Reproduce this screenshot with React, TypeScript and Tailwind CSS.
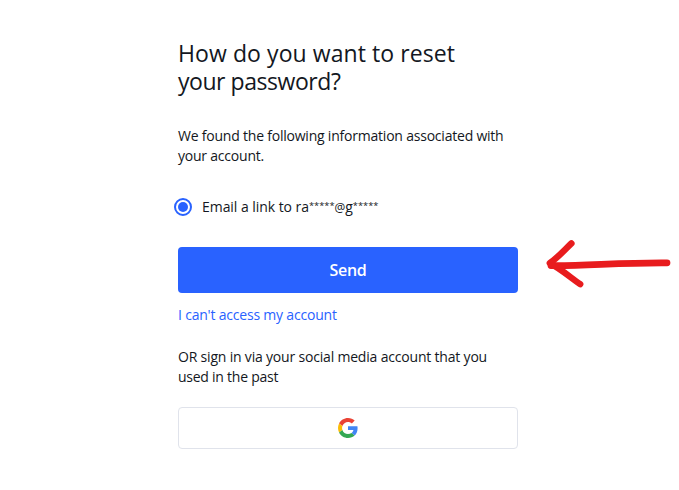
function GoogleLogo() {
  return (
    <svg width="20" height="20" viewBox="0 0 48 48" aria-label="Google">
      <path fill="#EA4335" d="M24 9.5c3.54 0 6.71 1.22 9.21 3.6l6.85-6.85C35.9 2.38 30.47 0 24 0 14.62 0 6.51 5.38 2.56 13.22l7.98 6.19C12.43 13.72 17.74 9.5 24 9.5z" />
      <path fill="#4285F4" d="M46.98 24.55c0-1.57-.15-3.09-.38-4.55H24v9.02h12.94c-.58 2.96-2.26 5.48-4.78 7.18l7.73 6c4.51-4.18 7.09-10.36 7.09-17.65z" />
      <path fill="#FBBC05" d="M10.53 28.59c-.48-1.45-.76-2.99-.76-4.59s.27-3.14.76-4.59l-7.98-6.19C.92 16.46 0 20.12 0 24c0 3.88.92 7.54 2.56 10.78l7.97-6.19z" />
      <path fill="#34A853" d="M24 48c6.48 0 11.93-2.13 15.89-5.81l-7.73-6c-2.15 1.45-4.92 2.3-8.16 2.3-6.26 0-11.57-4.22-13.47-9.91l-7.98 6.19C6.51 42.62 14.62 48 24 48z" />
    </svg>
  );
}

function Mask() {
  return <span className="align-[3px] text-[9.3px] leading-none tracking-normal">*****</span>;
}

function Arrow() {
  return (
    <svg
      className="pointer-events-none absolute left-[535px] top-[230px]"
      width="144"
      height="70"
      viewBox="0 0 144 70"
      fill="none"
      stroke="#e81c1e"
      strokeLinecap="round"
      strokeLinejoin="round"
    >
      <path d="M36.4 13.4 C30 19.5 24 26.5 14.8 33.2 C25 38.5 35 47 45.2 54.2" strokeWidth="6.4" />
      <path d="M16 35.5 C50 36 85 32.4 132 32.8" strokeWidth="6.8" />
    </svg>
  );
}

export default function App() {
  return (
    <main className="relative h-[490px] w-[679px] overflow-hidden bg-white pl-[178px] pt-[39px] font-['Trebuchet_MS','Open_Sans',sans-serif] text-sm leading-5 text-[#131722]">
      <div className="flex w-[340px] flex-col whitespace-nowrap">
        <h1 className="text-[23px] leading-7">
          <span className="block tracking-[0.08px]">How do you want to reset</span>
          <span className="block tracking-[-0.45px]">your password?</span>
        </h1>
        <p className="mt-[31px] tracking-[-0.216px]">
          <span className="block">We found the following information associated with</span>
          <span className="block">your account.</span>
        </p>
        <label className="-ml-1 mt-[31px] flex h-5 items-center">
          <input type="radio" name="method" defaultChecked className="peer sr-only" />
          <span className="flex size-[18px] items-center justify-center rounded-full border-2 border-[#2962ff]">
            <span className="size-[10px] rounded-full bg-[#2962ff]" />
          </span>
          <span className="ml-[10px] tracking-[-0.05px]">
            Email a link to ra<Mask /><span className="text-[12px]">@</span>g<Mask />
          </span>
        </label>
        <button className="mt-[30px] h-[46px] rounded bg-[#2962ff] text-base font-semibold tracking-[-0.3px] text-white">Send</button>
        <a className="mt-3 self-start tracking-[-0.2px] text-[#2962ff]">I can't access my account</a>
        <p className="mt-[22px]">
          <span className="block tracking-[-0.19px]">OR sign in via your social media account that you</span>
          <span className="block tracking-[-0.25px]">used in the past</span>
        </p>
        <button className="mt-5 flex h-[42px] items-center justify-center rounded border border-[#e0e3eb]">
          <GoogleLogo />
        </button>
      </div>
      <Arrow />
    </main>
  );
}
